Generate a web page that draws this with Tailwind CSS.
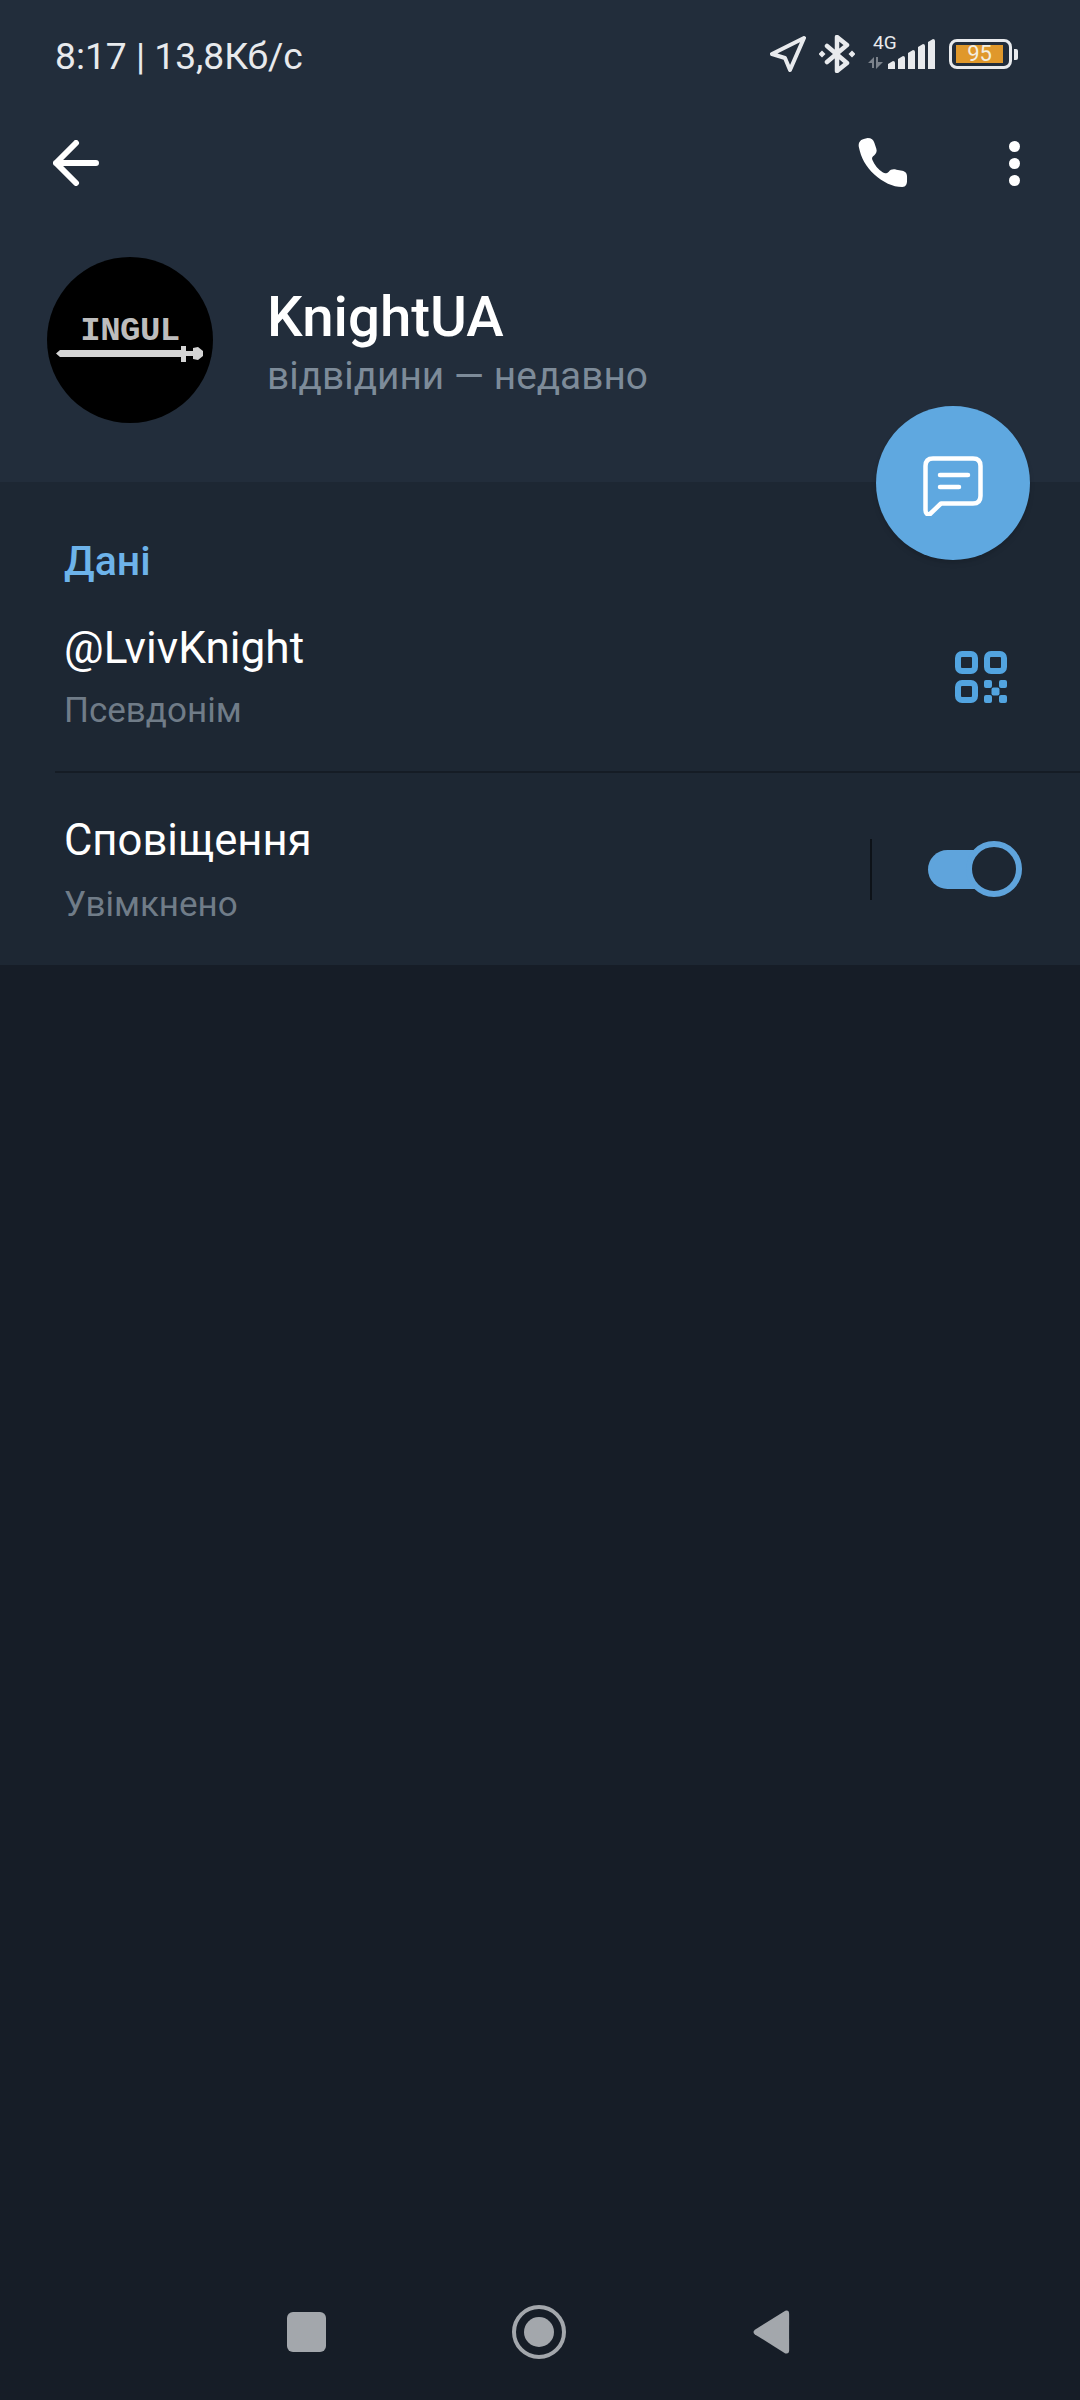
<!DOCTYPE html>
<html lang="en">

<head>
    <meta charset="UTF-8" />
    <meta name="viewport" content="width=device-width, initial-scale=1.0" />
    <title>KnightUA</title>
    <script src="https://cdn.jsdelivr.net/npm/@tailwindcss/browser@4"></script>
</head>

<body class="relative w-[1080px] h-[2400px] overflow-hidden bg-[#161d27] font-['Roboto',sans-serif]">
    <!-- header -->
    <div class="h-[482px] bg-[#222d3b]">
        <!-- status bar -->
        <div class="h-[110px] flex items-center justify-between pl-[55px] pr-[62px]">
            <span class="text-[37.2px] leading-[110px] pt-[2px] text-[#e8eaed]">8:17 | 13,8Кб/с</span>
            <div class="flex items-center gap-[13px] -mt-[2px]">
                <svg class="w-[36px] h-[36px]" viewBox="0 0 36 36" fill="none" stroke="#e8eaed" stroke-width="4" stroke-linejoin="round">
                    <path d="M34 2 L2 18 L15 22 L20 34 Z" />
                </svg>
                <svg class="w-[36px] h-[38px]" viewBox="0 0 36 38" fill="none" stroke="#e8eaed" stroke-width="4.5" stroke-linejoin="round" stroke-linecap="round">
                    <path d="M8 11 L28 28 L18 36 V2 L28 10 L8 27" />
                    <path d="M3 15.5 L6.5 19 L3 22.5 L-0.5 19 Z M33 15.5 L36.5 19 L33 22.5 L29.5 19 Z" fill="#e8eaed" stroke="none" />
                </svg>
                <div class="relative w-[67px] h-[30px]">
                    <span class="absolute left-[5px] top-[-6px] text-[19px] leading-[19px] text-[#e8eaed]">4G</span>
                    <svg class="absolute left-0 top-0 w-[67px] h-[30px]" viewBox="0 0 67 30" fill="#e8eaed">
                        <path d="M0 24 L6 18 V29 H4 V24 Z M8 18 H10 V23 H15 L8 30 Z" opacity="0.45" />
                        <path d="M20 25 L25 22 Q27 22 27 24 V30 H20 Z" />
                        <path d="M30 20 L35 17 Q37 17 37 19 V30 H30 Z" />
                        <path d="M40 14 L45 11 Q47 11 47 13 V30 H40 Z" />
                        <path d="M50 8 L55 5 Q57 5 57 7 V30 H50 Z" />
                        <path d="M60 3 L65 0 Q67 0 67 2 V30 H60 Z" />
                    </svg>
                </div>
                <div class="flex items-center ml-[1px]">
                    <div class="w-[63px] h-[30px] rounded-[8px] border-[3px] border-[#e8eaed] pl-[4px] pr-[6px] py-[3px]">
                        <div class="h-full bg-[#e0982b] flex items-center justify-center text-[22px] leading-none text-[#f3eee0]">95</div>
                    </div>
                    <div class="ml-[2px] w-[4px] h-[11px] rounded-r-[2px] bg-[#e8eaed]"></div>
                </div>
            </div>
        </div>
        <!-- toolbar -->
        <div class="h-[106px] flex items-center justify-between pl-[53px] pr-[60px]">
            <svg class="w-[46px] h-[46px]" viewBox="0 0 46 46" fill="none" stroke="#fff" stroke-width="6" stroke-linecap="round" stroke-linejoin="round">
                <path d="M43 23 H3 M23 3 L3 23 L23 43" />
            </svg>
            <div class="flex items-center gap-[101px]">
                <svg class="w-[50px] h-[50px]" viewBox="0 0 52 52" fill="#fff">
                    <path d="M6 1 C2 2 0 5 1 10 C3 20 8 30 17 38 C26 46 36 51 46 51 C50 51 51 48 51 44 L51 40 C51 36 49 35 46 34 L40 33 C36 32 34 33 32 35 C30 37 28 37 26 36 C21 33 17 28 15 23 C14 21 15 19 17 18 C19 16 20 14 19 11 L17 5 C16 2 14 0 10 0 Z" />
                </svg>
                <div class="flex flex-col gap-[6px] w-[11px]">
                    <div class="w-[11px] h-[11px] rounded-full bg-white"></div>
                    <div class="w-[11px] h-[11px] rounded-full bg-white"></div>
                    <div class="w-[11px] h-[11px] rounded-full bg-white"></div>
                </div>
            </div>
        </div>
        <!-- profile -->
        <div class="flex items-center pl-[47px] pt-[41px]">
            <div class="relative w-[166px] h-[166px] rounded-full bg-black shrink-0">
                <span class="absolute left-0 right-0 top-[57px] text-center font-['Liberation_Mono',monospace] font-bold text-[34px] leading-[34px] tracking-[-0.5px] text-[#bdbdbd]">INGUL</span>
                <svg class="absolute left-[9px] top-[89px] w-[147px] h-[16px]" viewBox="0 0 147 16" fill="#d4d4d4">
                    <path d="M0 7.5 L4 4 H125 V0 H130 V5 H137 V2 L142 1 L147 5 V10 L142 14 L137 13 V10 H130 V16 H125 V11 H4 Z" />
                </svg>
            </div>
            <div class="ml-[54px] mt-[8px]">
                <div class="text-[56.4px] leading-[64px] font-medium text-white">KnightUA</div>
                <div class="text-[38.8px] leading-[54px] text-[#7d8b99]">відвідини — недавно</div>
            </div>
        </div>
    </div>

    <!-- info section -->
    <div class="h-[483px] bg-[#1d2733]">
        <div class="h-[289px] relative">
            <div class="pl-[64px] pt-[56px] text-[41px] leading-[46px] font-medium text-[#6db3ea]">Дані</div>
            <div class="pl-[64px] pt-[38px] text-[44.2px] leading-[52px] text-white">@LvivKnight</div>
            <div class="pl-[64px] pt-[16px] text-[35px] leading-[42px] text-[#707c88]">Псевдонім</div>
            <svg class="absolute left-[955px] top-[169px] w-[52px] h-[52px]" viewBox="0 0 52 52" fill="none" stroke="#52a4e0" stroke-width="6">
                <rect x="3" y="3" width="17" height="17" rx="4" />
                <rect x="32" y="3" width="17" height="17" rx="4" />
                <rect x="3" y="32" width="17" height="17" rx="4" />
                <g fill="#52a4e0" stroke="none">
                    <rect x="29" y="29" width="8" height="8" rx="2" />
                    <rect x="44" y="29" width="8" height="8" rx="2" />
                    <rect x="36.5" y="36.5" width="8" height="8" rx="2" />
                    <rect x="29" y="44" width="8" height="8" rx="2" />
                    <rect x="44" y="44" width="8" height="8" rx="2" />
                </g>
            </svg>
        </div>
        <div class="ml-[55px] h-[2px] bg-[#151c25]"></div>
        <div class="flex items-center justify-between pl-[64px] pr-[58px] h-[192px]">
            <div class="mt-[2px]">
                <div class="text-[43.6px] leading-[52px] text-white">Сповіщення</div>
                <div class="pt-[17px] text-[35px] leading-[42px] text-[#707c88]">Увімкнено</div>
            </div>
            <div class="flex items-center">
                <div class="w-[2px] h-[61px] bg-[#0d1218]"></div>
                <div class="relative ml-[56px] w-[94px] h-[56px] flex items-center">
                    <div class="w-[80px] h-[39px] rounded-full bg-[#5fa4dc]"></div>
                    <div class="absolute right-0 top-0 w-[56px] h-[56px] rounded-full bg-[#1d2733] border-[6px] border-[#5fa4dc]"></div>
                </div>
            </div>
        </div>
    </div>

    <!-- floating button -->
    <div class="absolute left-[876px] top-[406px] w-[154px] h-[154px] rounded-full bg-[#5fa8e0] shadow-md flex items-center justify-center">
        <svg class="w-[60px] h-[60px] mt-[6px]" viewBox="0 0 60 60" fill="none" stroke="#fff" stroke-width="4.5" stroke-linecap="round" stroke-linejoin="round">
            <path d="M10 2.5 H50 Q57.5 2.5 57.5 10 V40 Q57.5 47.5 50 47.5 H18 L7 58 Q2.5 59 2.5 54 V10 Q2.5 2.5 10 2.5 Z" />
            <path d="M17 19 H45 M17 31 H36" />
        </svg>
    </div>

    <!-- navigation bar -->
    <div class="absolute left-0 right-0 bottom-0 h-[120px]">
        <div class="absolute left-[287px] top-[32px] w-[39px] h-[40px] rounded-[6px] bg-[#a3a7ac]"></div>
        <div class="absolute left-[512px] top-[25px] w-[54px] h-[54px] rounded-full border-[4px] border-[#a3a7ac] flex items-center justify-center">
            <div class="w-[30px] h-[30px] rounded-full bg-[#a3a7ac]"></div>
        </div>
        <svg class="absolute left-[753px] top-[29px] w-[38px] h-[46px]" viewBox="0 0 40 47" fill="#a3a7ac">
            <path d="M2 21 L34 1 Q38 0 38 4 V43 Q38 47 34 46 L2 26 Q-1 23.5 2 21 Z" />
        </svg>
    </div>
</body>

</html>
